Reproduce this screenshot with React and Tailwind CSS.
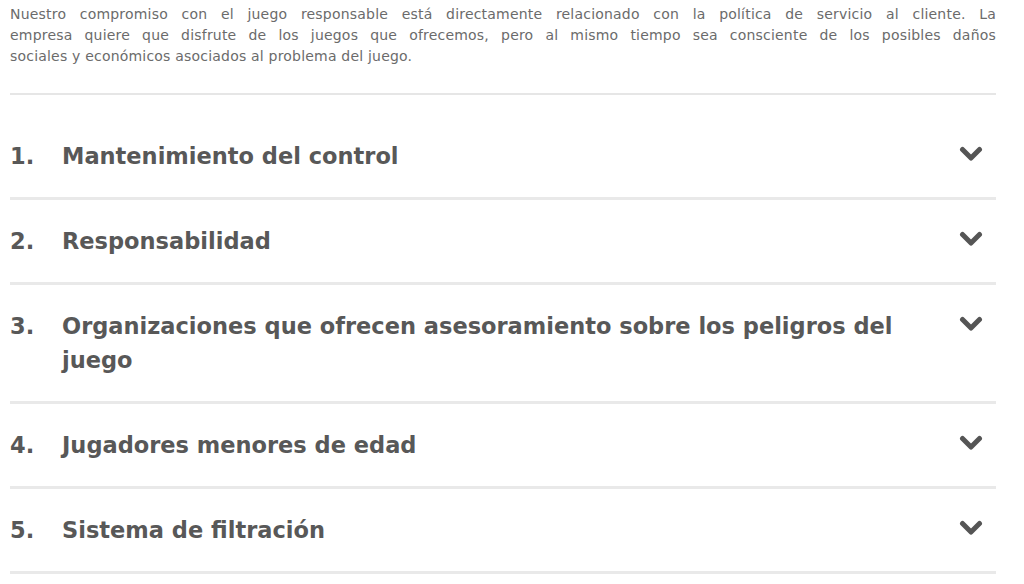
import React from "react";

const items = [
  "Mantenimiento del control",
  "Responsabilidad",
  "Organizaciones que ofrecen asesoramiento sobre los peligros del juego",
  "Jugadores menores de edad",
  "Sistema de filtración",
];

const Chevron = () => (
  <svg width="24" height="16" viewBox="0 0 24 16" className="mt-[7px] shrink-0">
    <polyline points="3.5,3.5 12,12 20.5,3.5" fill="none" stroke="#555555" strokeWidth="5" strokeLinecap="round" strokeLinejoin="round" />
  </svg>
);

const App = () => {
  return (
    <div className="w-[1024px] bg-white px-[10px] pt-[4px] font-['DejaVu_Sans',sans-serif]">
      {/* intro */}
      <div className="w-[986px] text-[14px] leading-[21px] tracking-[0.2px] text-[#6b6b6b] text-justify">
        <p className="[text-align-last:justify]">
          Nuestro compromiso con el juego responsable está directamente relacionado con la política de servicio al cliente. La
        </p>
        <p className="[text-align-last:justify]">
          empresa quiere que disfrute de los juegos que ofrecemos, pero al mismo tiempo sea consciente de los posibles daños
        </p>
        <p>sociales y económicos asociados al problema del juego.</p>
      </div>

      <div className="mt-[26px] h-[2px] w-[986px] bg-[#e6e6e6]" />

      {/* accordion */}
      <div className="mt-[20px] w-[986px]">
        {items.map((title, i) => (
          <div key={i} className="border-b-[3px] border-[#e9e9e9] py-6">
            <div className="flex items-start pr-[13px] text-[22.5px] font-bold leading-[34px] text-[#585858]">
              <span className="w-[52px] shrink-0">{i + 1}.</span>
              <span className="w-[860px]">{title}</span>
              <div className="ml-auto">
                <Chevron />
              </div>
            </div>
          </div>
        ))}
      </div>
    </div>
  );
};

export default App;
